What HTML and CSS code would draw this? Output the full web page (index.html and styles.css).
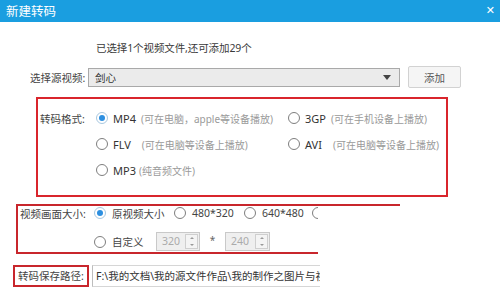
FILE: index.html
```html
<!DOCTYPE html>
<html lang="zh-CN">
<head>
<meta charset="utf-8">
<title>新建转码</title>
<link rel="stylesheet" href="styles.css">
</head>
<body>
<div class="dialog">
  <div class="titlebar">
    <span class="title">新建转码</span>
    <span class="close">✕</span>
  </div>

  <div class="info">已选择1个视频文件,还可添加29个</div>

  <div class="src-row">
    <span class="src-label">选择源视频:</span>
    <div class="combo">
      <span class="combo-text">剑心</span>
      <span class="combo-arrow"></span>
    </div>
    <button class="add-btn">添加</button>
  </div>

  <div class="fmt-box">
    <div class="fmt-grid">
      <span class="fmt-label">转码格式:</span>
      <label class="opt"><span class="radio checked"></span><span class="name">MP4</span><span class="hint">(可在电脑，apple等设备播放)</span></label>
      <label class="opt"><span class="radio"></span><span class="name">3GP</span><span class="hint">(可在手机设备上播放)</span></label>
      <span></span>
      <label class="opt"><span class="radio"></span><span class="name">FLV</span><span class="hint wide">(可在电脑等设备上播放)</span></label>
      <label class="opt"><span class="radio"></span><span class="name">AVI</span><span class="hint wide">(可在电脑等设备上播放)</span></label>
      <span></span>
      <label class="opt"><span class="radio"></span><span class="name">MP3</span><span class="hint narrow">(纯音频文件)</span></label>
      <span></span>
    </div>
  </div>

  <div class="size-box">
    <div class="size-row1">
      <span class="size-label">视频画面大小:</span>
      <label class="sopt w1"><span class="radio checked"></span><span class="stext">原视频大小</span></label>
      <label class="sopt w2"><span class="radio"></span><span class="stext">480*320</span></label>
      <label class="sopt w3"><span class="radio"></span><span class="stext">640*480</span></label>
      <label class="sopt"><span class="radio"></span></label>
    </div>
    <div class="size-row2">
      <label class="sopt custom"><span class="radio"></span><span class="stext">自定义</span></label>
      <div class="spin s1"><span class="spin-val">320</span><span class="spin-btns"><span class="up"></span><span class="down"></span></span></div>
      <span class="times">*</span>
      <div class="spin s2"><span class="spin-val">240</span><span class="spin-btns"><span class="up"></span><span class="down"></span></span></div>
    </div>
  </div>

  <div class="path-row">
    <span class="path-label">转码保存路径:</span>
    <div class="path-input">F:\我的文档\我的源文件作品\我的制作之图片与视</div>
  </div>
</div>
</body>
</html>
```

FILE: styles.css
```css
html, body {
  margin: 0;
  padding: 0;
  background: #ffffff;
}
body {
  font-family: "Noto Sans", "Noto Sans CJK SC", sans-serif;
  font-size: 11px;
  color: #3a3a3a;
  width: 500px;
  height: 297px;
  overflow: hidden;
}
.dialog {
  width: 500px;
}
.titlebar {
  height: 22px;
  background: #1a9ee0;
  display: flex;
  align-items: center;
  justify-content: space-between;
  padding: 0 5px 0 6px;
  color: #ffffff;
}
.title {
  font-family: "Noto Sans CJK SC", sans-serif;
  font-size: 12.5px;
  line-height: 22px;
}
.close {
  font-size: 11px;
  font-weight: bold;
  line-height: 22px;
  font-family: "DejaVu Sans", sans-serif;
}
.info {
  margin-top: 19px;
  padding-left: 96px;
  height: 14px;
  line-height: 14px;
  font-size: 10.5px;
  color: #3a3a3a;
  letter-spacing: -0.1px;
}
.src-row {
  margin-top: 11px;
  height: 22px;
  display: flex;
  align-items: center;
}
.src-label {
  margin-left: 30px;
  width: 58px;
  font-size: 10.5px;
  color: #444;
}
.combo {
  width: 312px;
  height: 19px;
  box-sizing: border-box;
  border: 1px solid #a9a9a9;
  background: #ebebeb;
  display: flex;
  align-items: center;
  justify-content: space-between;
  padding: 0 8px 0 6px;
}
.combo-text {
  font-size: 10.5px;
  color: #333;
}
.combo-arrow {
  width: 0;
  height: 0;
  border-left: 4.5px solid transparent;
  border-right: 4.5px solid transparent;
  border-top: 5px solid #444;
}
.add-btn {
  margin-left: 8px;
  width: 53px;
  height: 22px;
  box-sizing: border-box;
  border: 1px solid #d2d2d2;
  border-radius: 2px;
  background: #f5f5f5;
  font-family: "Noto Sans CJK SC", sans-serif;
  font-size: 10.5px;
  color: #555;
  padding: 0;
}
.fmt-box {
  margin-top: 9px;
  margin-left: 36px;
  width: 412px;
  height: 100px;
  box-sizing: border-box;
  border: 2px solid #d9252c;
  padding: 6px 0 0 2px;
}
.fmt-grid {
  display: grid;
  grid-template-columns: 56px 192px 1fr;
  grid-auto-rows: 26px;
  align-items: center;
}
.fmt-label {
  font-size: 10.5px;
  color: #444;
}
.opt {
  display: flex;
  align-items: center;
}
.radio {
  width: 12px;
  height: 12px;
  box-sizing: border-box;
  border: 1px solid #7e7e7e;
  border-radius: 50%;
  background: #fff;
  flex: none;
  position: relative;
}
.radio.checked {
  border-color: #a8c8e0;
}
.radio.checked::after {
  content: "";
  position: absolute;
  left: 2px;
  top: 2px;
  width: 6px;
  height: 6px;
  border-radius: 50%;
  background: #2d8fe0;
}
.name {
  margin-left: 5px;
  font-size: 11px;
  color: #333;
}
.hint {
  margin-left: 5px;
  font-size: 10px;
  color: #9a9a9a;
}
.hint.wide {
  margin-left: 11px;
}
.hint.narrow {
  margin-left: 3px;
}
.size-box {
  margin-top: 7px;
  margin-left: 16px;
  width: 302px;
  height: 50px;
  box-sizing: border-box;
  border-top: 2px solid #c8262c;
  border-bottom: 2px solid #c8262c;
  border-left: 2px solid #c8262c;
  position: relative;
  padding-left: 2px;
  overflow: visible;
}
.size-box::after {
  content: "";
  position: absolute;
  left: 300px;
  top: -2px;
  width: 82px;
  height: 2px;
  background: #c8262c;
}
.size-row1 {
  height: 14px;
  display: flex;
  align-items: center;
  overflow: hidden;
  white-space: nowrap;
}
.size-label {
  width: 74px;
  flex: none;
  font-size: 10.5px;
  color: #444;
}
.sopt {
  display: flex;
  align-items: center;
  flex: none;
}
.sopt.w1 { width: 80px; }
.sopt.w2 { width: 70px; }
.sopt.w3 { width: 68px; }
.stext {
  margin-left: 6px;
  font-size: 10.5px;
  color: #444;
}
.size-row2 {
  margin-top: 12px;
  height: 19px;
  display: flex;
  align-items: center;
  padding-left: 74px;
}
.sopt.custom {
  width: 62px;
}
.spin {
  width: 44px;
  height: 19px;
  box-sizing: border-box;
  border: 1px solid #c9c9c9;
  background: #efefef;
  display: flex;
  justify-content: space-between;
  align-items: stretch;
}
.spin.s2 { width: 45px; }
.spin-val {
  padding-left: 5px;
  font-size: 10.5px;
  line-height: 17px;
  color: #ababab;
}
.spin-btns {
  width: 11px;
  margin: 1px 1px 1px 0;
  border: 1px solid #cfcfcf;
  background: #f4f4f4;
  display: flex;
  flex-direction: column;
  align-items: center;
  justify-content: space-around;
}
.spin-btns .up {
  width: 0; height: 0;
  border-left: 2px solid transparent;
  border-right: 2px solid transparent;
  border-bottom: 2px solid #999;
}
.spin-btns .down {
  width: 0; height: 0;
  border-left: 2px solid transparent;
  border-right: 2px solid transparent;
  border-top: 2px solid #999;
}
.times {
  width: 25px;
  text-align: center;
  font-size: 10px;
  color: #666;
  margin-bottom: 4px;
}
.path-row {
  margin-top: 11px;
  height: 22px;
  display: flex;
  align-items: stretch;
}
.path-label {
  margin-left: 13px;
  width: 76px;
  box-sizing: border-box;
  border: 2px solid #c8262c;
  font-size: 10.5px;
  color: #444;
  line-height: 18px;
  padding-left: 3px;
  white-space: nowrap;
}
.path-input {
  margin-left: 3px;
  width: 228px;
  box-sizing: border-box;
  border-top: 1px solid #d6d6d6;
  border-bottom: 1px solid #d6d6d6;
  border-left: 1px solid #bdbdbd;
  font-size: 10.5px;
  color: #333;
  line-height: 20px;
  padding-left: 3px;
  white-space: nowrap;
  overflow: hidden;
}
```
